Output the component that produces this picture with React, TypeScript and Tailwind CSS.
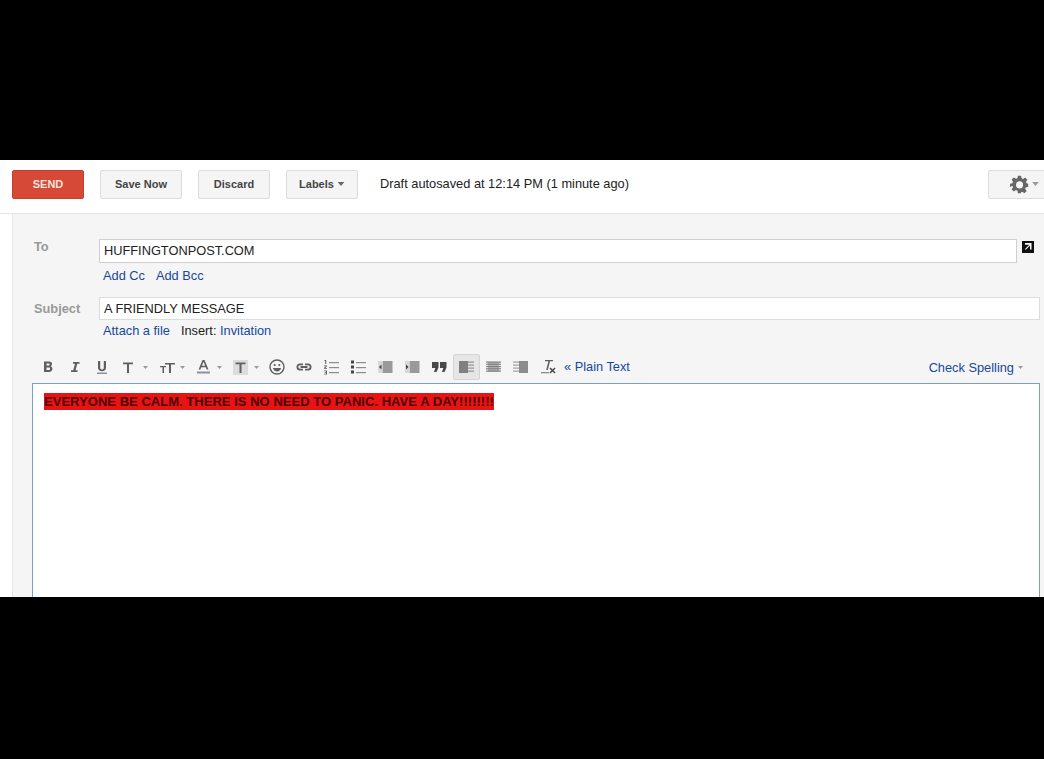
import React from "react";

const Caret = ({ c = "#9a9a9a", w = 5, h = 3 }: { c?: string; w?: number; h?: number }) => (
  <svg width={w} height={h} viewBox="0 0 5 3" className="shrink-0"><path d="M0 0h5L2.500 3z" fill={c} /></svg>
);

const Ic = ({ children, w = 16, h = 16 }: { children: React.ReactNode; w?: number; h?: number }) => (
  <svg width={w} height={h} viewBox={`0 0 ${w} ${h}`} fill="#5f5f5f">{children}</svg>
);

const Cell = ({ children, active }: { children: React.ReactNode; active?: boolean }) => (
  <div className={`w-[27px] h-[26px] flex items-center justify-center shrink-0 rounded-[2px] ${active ? "bg-[#e6e6e6] border border-[#d4d4d4]" : ""}`}>{children}</div>
);

const CaretCell = ({ children, w, gap = "gap-[6px]" }: { children: React.ReactNode; w: string; gap?: string }) => (
  <div className={`${w} h-[26px] flex items-center shrink-0 ${gap}`}>{children}</div>
);

const lines = (ys: number[], x: number, w: number, c = "#8c8c8c") =>
  ys.map((y) => <rect key={y} x={x} y={y} width={w} height="1.2" fill={c} />);

const Tool = () => (
  <div className="flex items-center h-[26px] mt-[16px] pl-[21px] pr-[21px]">
    <Cell><Ic><path d="M4 2.500h5c2 0 3 1 3 2.600 0 1-.5 1.800-1.300 2.200 1 .4 1.700 1.200 1.700 2.500 0 1.900-1.300 3.200-3.400 3.200H4zM6.500 4.500v2.100h2c.7 0 1.100-.4 1.100-1s-.4-1.100-1.100-1.100zm0 4v2.600h2.300c.8 0 1.300-.5 1.300-1.300s-.5-1.300-1.300-1.300z" /></Ic></Cell>
    <Cell><Ic><path d="M6 3h6.500v1.700h-2.200L8.500 11.300h2V13H4v-1.700h2.200L8 4.700H6z" /></Ic></Cell>
    <Cell><Ic><path d="M4 2h2.200v6.500c0 1.400.7 2 1.800 2s1.800-.6 1.800-2V2H12v6.500c0 2.500-1.600 3.800-4 3.800S4 11 4 8.500z" /><rect x="3" y="13.500" width="10" height="1.500" fill="#8f8f9f" /></Ic></Cell>
    <div className="w-[7px] shrink-0" />
    <CaretCell w="w-[31px]" gap="gap-[9px]"><Ic w={12} h={14}><path d="M1 2.500h10v1.700H7V13H5V4.200H1z" /></Ic><Caret /></CaretCell>
    <div className="w-[7px] shrink-0" />
    <CaretCell w="w-[32px]" gap="gap-[5px]"><Ic w={15} h={14}><path d="M5 3h10v1.600h-4V13H9V4.600H5zM0 6h6v1.300H4V13H2.500V7.300H0z" /></Ic><Caret /></CaretCell>
    <div className="w-[4px] shrink-0" />
    <CaretCell w="w-[29px]"><Ic w={15} h={16}><path d="M6.500 1h2l4 9.500h-1.800l-.9-2.300H5.300l-.9 2.300H2.600zM5.900 6.700h3.300L7.500 2.800z" /><rect x="1" y="12.500" width="13" height="2" fill="#8f8f9f" /></Ic><Caret /></CaretCell>
    <div className="w-[8px] shrink-0" />
    <CaretCell w="w-[27px]"><div className="w-[15px] h-[15px] bg-[#dcdcdc] flex items-center justify-center shrink-0"><Ic w={11} h={11}><path d="M.5 .5h10v1.800H6.500V11h-2V2.300H.5z" /></Ic></div><Caret /></CaretCell>
    <div className="w-[3px] shrink-0" />
    <Cell><Ic w={16} h={16}><circle cx="8" cy="8" r="7" fill="none" stroke="#5f5f5f" strokeWidth="1.400" /><circle cx="5.700" cy="6" r="1.100" /><circle cx="10.300" cy="6" r="1.100" /><path d="M4 9h8c-.3 2.200-2 3.500-4 3.500S4.300 11.200 4 9z" /></Ic></Cell>
    <Cell><Ic w={18} h={10}><path d="M5 1.500h3v1.800H5a1.700 1.700 0 000 3.400h3v1.800H5a3.500 3.500 0 010-7zM10 1.500h3a3.500 3.500 0 010 7h-3V6.700h3a1.700 1.700 0 000-3.400h-3zM5.500 4.100h7v1.800h-7z" /></Ic></Cell>
    <Cell><Ic w={16} h={16}>{lines([3, 8, 13], 6, 10)}<path d="M1.500 1h1.700v4H2.200V2H1.500zM1 6.500h3v.8L2.300 9H4v.8H1v-.8l1.800-1.700H1zM1 11.500h3v4H1v-.8h2v-.8H1.800v-.7H3v-.9H1z" /></Ic></Cell>
    <Cell><Ic w={16} h={16}>{lines([3, 8, 13], 6, 10)}<rect x="1" y="1.500" width="3" height="3" fill="#444" /><rect x="1" y="6.500" width="3" height="3" fill="#444" /><rect x="1" y="11.500" width="3" height="3" fill="#444" /></Ic></Cell>
    <div className="w-[1px] shrink-0" />
    <Cell><Ic w={15} h={14}><rect x="4.500" y="1" width="10" height="12" fill="#9a9a9a" /><rect x="0" y="1" width="4.500" height="12" fill="#d8d8d8" /><path d="M3.500 4.500v5L1 7z" fill="#444" /></Ic></Cell>
    <Cell><Ic w={15} h={14}><rect x="4.500" y="1" width="10" height="12" fill="#9a9a9a" /><rect x="0" y="1" width="4.500" height="12" fill="#d8d8d8" /><path d="M1 4.500v5L3.500 7z" fill="#444" /></Ic></Cell>
    <Cell><Ic w={15} h={12}><path d="M0 1h6.500v5.500L4.500 11H2l1.300-4H0zM8 1h6.500v5.500L12.500 11H10l1.300-4H8z" fill="#484848" /></Ic></Cell>
    <Cell active><Ic w={15} h={12}><rect width="9" height="12" fill="#808080" />{lines([.5, 3.500, 6.500, 9.500], 9, 6, "#909090")}</Ic></Cell>
    <Cell><Ic w={15} h={12}><rect x="2" y="1" width="11" height="10" fill="#8c8c8c" opacity=".6" />{lines([.5, 2.700, 5, 7.200, 9.500], 0, 15, "#808080")}</Ic></Cell>
    <Cell><Ic w={15} h={12}>{lines([.5, 3.500, 6.500, 9.500], 0, 6, "#a0a0a0")}<rect x="6" width="9" height="12" fill="#8c8c8c" /></Ic></Cell>
    <Cell><Ic w={16} h={16}><path d="M5 1h8v1.300h-3L7.800 11H6.200l2.200-8.700H5z" /><rect x="1" y="13" width="8" height="1.300" fill="#8c8c8c" /><path d="M9.500 9.500l1-1 2 2 2-2 1 1-2 2 2 2-1 1-2-2-2 2-1-1 2-2z" fill="#444" /></Ic></Cell>
    <a className="ml-[3px] text-[#15489a]">« Plain Text</a>
    <a className="ml-auto flex items-center gap-[4px] text-[#15489a] mt-[1px]">Check Spelling <Caret /></a>
  </div>
);

const Btn = ({ children, w, className = "" }: { children: React.ReactNode; w: string; className?: string }) => (
  <div className={`${w} h-[29px] shrink-0 flex items-center justify-center rounded-[2px] border border-[#dcdcdc] bg-[#f5f5f5] text-[11px] font-bold text-[#444] ${className}`}>{children}</div>
);

export default function App() {
  return (
    <div className="w-[1044px] h-[759px] bg-black pt-[160px] overflow-hidden" style={{ fontFamily: '"Liberation Sans", Arial, sans-serif' }}>
      <div className="h-[437px] bg-white overflow-hidden flex flex-col text-[12.800px]">
        <div className="h-[54px] shrink-0 border-b border-[#e5e5e5] flex items-center pl-[12px] pb-[5px]">
          <div className="w-[72px] h-[29px] shrink-0 flex items-center justify-center rounded-[2px] bg-[#d64937] border border-[#c5402e] text-[11px] font-bold text-[#f3e3df]">SEND</div>
          <Btn w="w-[82px]" className="ml-[16px]">Save Now</Btn>
          <Btn w="w-[72px]" className="ml-[16px]">Discard</Btn>
          <Btn w="w-[72px]" className="ml-[16px] gap-[3px]">Labels <Caret c="#666" w={8} h={4} /></Btn>
          <span className="ml-[22px] text-[12.800px] text-[#222]">Draft autosaved at 12:14 PM (1 minute ago)</span>
          <div className="ml-auto w-[60px] h-[29px] -mr-[4px] shrink-0 flex items-center justify-start gap-[3px] pl-[21px] border border-[#dcdcdc] bg-[#f5f5f5] rounded-[2px]">
            <svg width="19" height="19" viewBox="0 0 24 24" fill="#666" fillRule="evenodd"><path d="M10 1h4l.6 3.100 1.900.8 2.700-1.800 2.800 2.800-1.800 2.700.8 1.900L23 11v4l-3 .6-.8 1.900 1.800 2.700-2.800 2.800-2.700-1.800-1.900.8L14 23h-4l-.6-3.100-1.900-.8-2.700 1.800-2.800-2.800 1.800-2.700-.8-1.900L0 15v-4l3-.6.800-1.900L2 5.800 4.800 3l2.700 1.800 1.900-.8zM12 8a4.500 4.500 0 100 9 4.500 4.500 0 000-9z" /></svg>
            <Caret w={7} h={4} />
          </div>
        </div>
        <div className="flex-1 ml-[12px] bg-[#f5f5f5] border-l border-[#e5e5e5] pt-[25px] min-h-0 flex flex-col">
          <div className="flex items-start pl-[21px]">
            <span className="w-[65px] text-[#999] font-bold leading-[16px] shrink-0">To</span>
            <div className="w-[918px] h-[24px] shrink-0 bg-white border border-[#cfcfcf] pl-[4px] flex items-center text-[#222]">HUFFINGTONPOST.COM</div>
            <svg width="12" height="12" viewBox="0 0 12 12" className="ml-[5px] mt-[2px] shrink-0"><rect width="12" height="12" fill="#111" /><path d="M3 2h6.500v6.500H8V4.600L3.800 8.800 3 8l4.300-4.300H3z" fill="#fff" /></svg>
          </div>
          <div className="ml-[90px] mt-[5px] flex gap-[11px] leading-[15px] text-[#15489a]"><a>Add Cc</a><a>Add Bcc</a></div>
          <div className="flex items-start pl-[21px] mt-[14px]">
            <span className="w-[65px] text-[#999] font-bold leading-[23px] shrink-0">Subject</span>
            <div className="w-[941px] h-[23px] shrink-0 bg-white border border-[#dcdcdc] pl-[4px] flex items-center text-[#222]">A FRIENDLY MESSAGE</div>
          </div>
          <div className="ml-[90px] mt-[3px] leading-[15px] text-[#222]"><a className="text-[#15489a]">Attach a file</a><span className="ml-[11px]">Insert: </span><a className="text-[#15489a]">Invitation</a></div>
          <Tool />
          <div className="ml-[19px] mr-[4px] mt-[3px] flex-1 bg-white border border-[#7e9fc4] border-b-0 pt-[8px] pl-[11px] min-h-0">
            <span className="bg-[#e81414] text-[#4a0000] text-[13px] font-bold tracking-[0.030px] leading-[17px] inline-block whitespace-nowrap">EVERYONE BE CALM. THERE IS NO NEED TO PANIC. HAVE A DAY!!!!!!!!</span>
          </div>
        </div>
      </div>
    </div>
  );
}
